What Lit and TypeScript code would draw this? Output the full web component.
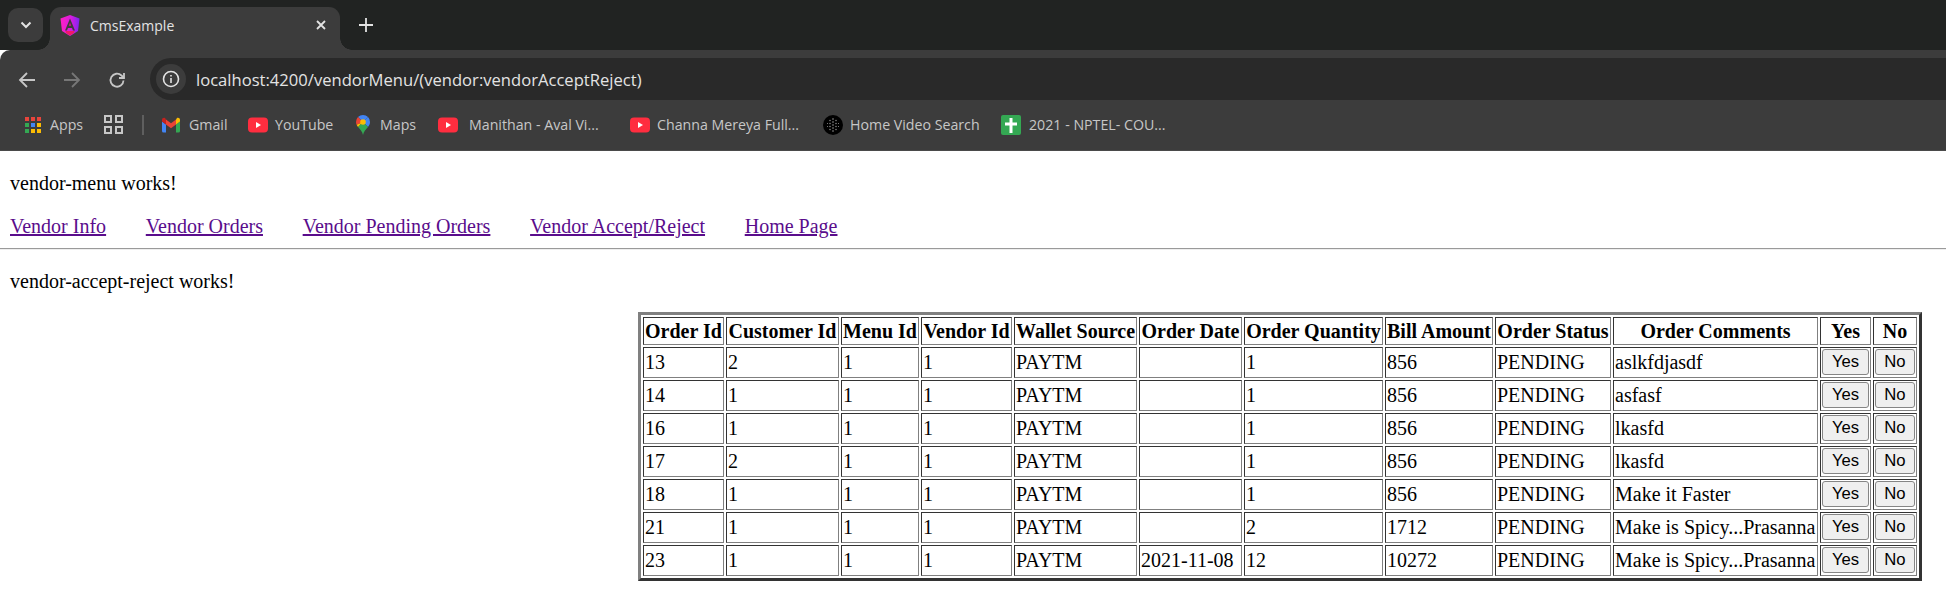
import { LitElement, html, css, svg } from 'lit';
import { customElement } from 'lit/decorators.js';

const ytIcon = svg`<rect x="0" y="2" width="20" height="15" rx="4" fill="#ff2d3f"/><path d="M8 6.500l5 3-5 3z" fill="#fff"/>`;

const icons: Record<string, unknown> = {
  apps: svg`
    <rect x="0" y="0" width="4" height="4" fill="#e8453c"/><rect x="6" y="0" width="4" height="4" fill="#e8453c"/><rect x="12" y="0" width="4" height="4" fill="#e8453c"/>
    <rect x="0" y="6" width="4" height="4" fill="#34a853"/><rect x="6" y="6" width="4" height="4" fill="#4285f4"/><rect x="12" y="6" width="4" height="4" fill="#fbbc04"/>
    <rect x="0" y="12" width="4" height="4" fill="#34a853"/><rect x="6" y="12" width="4" height="4" fill="#fbbc04"/><rect x="12" y="12" width="4" height="4" fill="#fbbc04"/>`,
  gmail: svg`
    <path d="M0 5v9.500A1.500 1.500 0 0 0 1.500 16H4V8z" fill="#4285f4"/>
    <path d="M14 16h2.500A1.500 1.500 0 0 0 18 14.500V5l-4 3z" fill="#34a853"/>
    <path d="M14 3v5l4-3V3.500C18 1.500 16 .8 14.800 1.800z" fill="#fbbc04"/>
    <path d="M4 8V3l5 3.800L14 3v5l-5 3.800z" fill="#ea4335"/>
    <path d="M0 3.500V5l4 3V3L3.200 1.800C2 .8 0 1.500 0 3.500z" fill="#c5221f"/>`,
  youtube: ytIcon,
  maps: svg`
    <path d="M7 0A7 7 0 0 0 2 2.100L7 7l5-4.900A7 7 0 0 0 7 0z" fill="#4285f4"/>
    <path d="M12 2.100A7 7 0 0 1 14 7c0 2-.8 3.500-2 5L7 7z" fill="#4285f4"/>
    <path d="M2 2.100A7 7 0 0 0 0 7c0 1 .2 1.800.6 2.700L7 7z" fill="#ea4335"/>
    <path d="M.6 9.700c.4.9.9 1.600 1.500 2.300L7 7z" fill="#fbbc04"/>
    <path d="M2.100 12C4 14.300 6.300 16.500 7 20c.7-3.500 3-5.700 5-8L7 7z" fill="#34a853"/>
    <circle cx="7" cy="7" r="2.800" fill="#fbbc04"/>`,
  home: svg`<circle cx="10" cy="10" r="10" fill="#000"/><g fill="#999"><circle cx="10" cy="4" r=".8"/><circle cx="10" cy="7" r=".8"/><circle cx="10" cy="10" r=".8"/><circle cx="10" cy="13" r=".8"/><circle cx="10" cy="16" r=".8"/><circle cx="7" cy="5.500" r=".7"/><circle cx="7" cy="8.500" r=".7"/><circle cx="7" cy="11.500" r=".7"/><circle cx="7" cy="14.500" r=".7"/><circle cx="13" cy="5.500" r=".7"/><circle cx="13" cy="8.500" r=".7"/><circle cx="13" cy="11.500" r=".7"/><circle cx="13" cy="14.500" r=".7"/><circle cx="4.500" cy="8.500" r=".5"/><circle cx="4.500" cy="11.500" r=".5"/><circle cx="15.500" cy="8.500" r=".5"/><circle cx="15.500" cy="11.500" r=".5"/></g>`,
  sheet: svg`<rect width="20" height="20" rx="2" fill="#34a853"/><path d="M8.500 3h3v4.500H16v3h-4.500V18h-3v-7.500H4v-3h4.500z" fill="#fff"/>`,
};

const bookmarks = [
  { label: 'Apps', icon: 'apps', box: '0 0 16 16', size: 16, width: 79, gap: 9 },
  { label: '', icon: 'grid', box: '', size: 0, width: 38, gap: 0 },
  { label: '', icon: 'sep', box: '', size: 0, width: 20, gap: 0 },
  { label: 'Gmail', icon: 'gmail', box: '0 0 18 17', size: 18, width: 86, gap: 9 },
  { label: 'YouTube', icon: 'youtube', box: '0 0 20 19', size: 20, width: 108, gap: 7 },
  { label: 'Maps', icon: 'maps', box: '0 0 14 20', size: 14, width: 82, gap: 10 },
  { label: 'Manithan - Aval Vi...', icon: 'youtube', box: '0 0 20 19', size: 20, width: 192, gap: 11 },
  { label: 'Channa Mereya Full...', icon: 'youtube', box: '0 0 20 19', size: 20, width: 193, gap: 7 },
  { label: 'Home Video Search', icon: 'home', box: '0 0 20 20', size: 20, width: 178, gap: 7 },
  { label: '2021 - NPTEL- COU...', icon: 'sheet', box: '0 0 20 20', size: 20, width: 170, gap: 8 },
];

const links = ['Vendor Info', 'Vendor Orders', 'Vendor Pending Orders', 'Vendor Accept/Reject', 'Home Page'];

const columns = [
  { title: 'Order Id', width: 81 },
  { title: 'Customer Id', width: 113 },
  { title: 'Menu Id', width: 78 },
  { title: 'Vendor Id', width: 91 },
  { title: 'Wallet Source', width: 123 },
  { title: 'Order Date', width: 103 },
  { title: 'Order Quantity', width: 139 },
  { title: 'Bill Amount', width: 108 },
  { title: 'Order Status', width: 116 },
  { title: 'Order Comments', width: 205 },
  { title: 'Yes', width: 51 },
  { title: 'No', width: 44 },
];

// order rows, same shape as the table columns minus the two buttons
const orders = [
  ['13', '2', '1', '1', 'PAYTM', '', '1', '856', 'PENDING', 'aslkfdjasdf'],
  ['14', '1', '1', '1', 'PAYTM', '', '1', '856', 'PENDING', 'asfasf'],
  ['16', '1', '1', '1', 'PAYTM', '', '1', '856', 'PENDING', 'lkasfd'],
  ['17', '2', '1', '1', 'PAYTM', '', '1', '856', 'PENDING', 'lkasfd'],
  ['18', '1', '1', '1', 'PAYTM', '', '1', '856', 'PENDING', 'Make it Faster'],
  ['21', '1', '1', '1', 'PAYTM', '', '2', '1712', 'PENDING', 'Make is Spicy...Prasanna'],
  ['23', '1', '1', '1', 'PAYTM', '2021-11-08', '12', '10272', 'PENDING', 'Make is Spicy...Prasanna'],
];

@customElement('app-root')
export class AppRoot extends LitElement {
  static styles = css`
    :host {
      display: block;
      background: #fff;
      color: #000;
      font-family: 'Liberation Serif', serif;
      font-size: 20px;
    }
    .strip {
      display: flex;
      height: 50px;
      background: #212322;
      box-sizing: border-box;
      padding: 7px 0 0 8px;
      font-family: 'Open Sans', sans-serif;
    }
    .tab-list {
      width: 35px;
      height: 34px;
      margin-top: 1px;
      background: #3c3c3c;
      border-radius: 10px;
      display: flex;
      align-items: center;
      justify-content: center;
    }
    .tab {
      position: relative;
      width: 290px;
      height: 43px;
      margin-left: 7px;
      background: #3c3c3c;
      border-radius: 11px 11px 0 0;
      display: flex;
      align-items: center;
      box-sizing: border-box;
      padding: 0 0 7px 10px;
      color: #e3e3e3;
      font-size: 14px;
    }
    .tab::before,
    .tab::after {
      content: '';
      position: absolute;
      bottom: 0;
      width: 12px;
      height: 12px;
    }
    .tab::before {
      left: -12px;
      background: radial-gradient(circle at 0 0, transparent 11.500px, #3c3c3c 12px);
    }
    .tab::after {
      right: -12px;
      background: radial-gradient(circle at 100% 0, transparent 11.500px, #3c3c3c 12px);
    }
    .tab-title {
      flex: 1;
      margin-left: 10px;
    }
    .tab-close {
      margin-right: 13px;
    }
    .new-tab {
      margin: 11px 0 0 19px;
    }
    .toolbar {
      display: flex;
      align-items: flex-start;
      height: 56px;
      background: #3c3c3c;
      border-radius: 10px 0 0 0;
      box-sizing: border-box;
      padding-top: 8px;
    }
    .nav {
      display: flex;
      width: 150px;
      box-sizing: border-box;
      padding-left: 18px;
      margin-top: 13px;
      gap: 27px;
    }
    .omnibox {
      flex: 1;
      height: 42px;
      background: #292929;
      border-radius: 21px 0 0 21px;
      display: flex;
      align-items: center;
      box-sizing: border-box;
      padding-left: 6px;
      color: #e3e3e3;
      font-family: 'Open Sans', sans-serif;
      font-size: 16.600px;
    }
    .omnibox span {
      padding-top: 1px;
    }
    .info {
      width: 30px;
      height: 30px;
      border-radius: 50%;
      background: #3c3c3c;
      display: flex;
      align-items: center;
      justify-content: center;
      margin-right: 10px;
    }
    .bookmarks {
      display: flex;
      align-items: center;
      height: 45px;
      background: #3c3c3c;
      box-sizing: border-box;
      padding: 0 0 7px 25px;
      border-bottom: 1px solid #4a4a4a;
      color: #c7c7c7;
      font-family: 'Open Sans', sans-serif;
      font-size: 14.200px;
    }
    .bookmark {
      display: flex;
      align-items: center;
      white-space: nowrap;
    }
    .sep {
      width: 2px;
      height: 20px;
      background: #5f5f5f;
    }
    .page {
      padding: 21px 0 0 0;
    }
    p {
      margin: 0;
      padding-left: 10px;
      line-height: 23px;
    }
    .links {
      display: flex;
      gap: 39.700px;
      padding: 20px 0 0 10px;
      line-height: 23px;
    }
    .links a {
      color: #5a0d8c;
      text-decoration: underline;
    }
    hr {
      margin: 10px 0 20px 0;
      border: none;
      border-top: 1px solid #9a9a9a;
      border-bottom: 1px solid #eee;
    }
    .table-wrap {
      display: flex;
      justify-content: flex-end;
      padding: 19px 24px 24px 0;
    }
    table {
      table-layout: fixed;
      border-collapse: separate;
      border-spacing: 2px;
      border-style: solid;
      border-width: 3px;
      border-color: #808080 #333 #333 #808080;
      width: 1284px;
    }
    th,
    td {
      box-sizing: border-box;
      padding: 0 1px;
      border: 1px solid;
      border-color: #333 #808080 #808080 #333;
      white-space: nowrap;
    }
    th {
      height: 28px;
      font-weight: bold;
      text-align: center;
    }
    td {
      height: 31px;
      text-align: left;
    }
    .btn-cell {
      padding: 1px;
      vertical-align: top;
    }
    button {
      display: block;
      width: 100%;
      height: 26px;
      margin: 0;
      padding: 0;
      background: #efefef;
      border: 1px solid #858585;
      border-radius: 3px;
      color: #000;
      font-family: 'Liberation Sans', sans-serif;
      font-size: 16.670px;
    }
  `;

  renderBookmark(b: (typeof bookmarks)[number]) {
    if (b.icon === 'grid') {
      return html`<div class="bookmark" style="width:${b.width}px">
        <svg width="19" height="19" viewBox="0 0 19 19" fill="none" stroke="#c7c7c7" stroke-width="2">
          <rect x="1" y="1" width="6" height="6"/><rect x="12" y="1" width="6" height="6"/>
          <rect x="1" y="12" width="6" height="6"/><rect x="12" y="12" width="6" height="6"/>
        </svg>
      </div>`;
    }
    if (b.icon === 'sep') {
      return html`<div class="bookmark" style="width:${b.width}px"><div class="sep"></div></div>`;
    }
    return html`<div class="bookmark" style="width:${b.width}px;gap:${b.gap}px">
      <svg width=${b.size} height="20" viewBox=${b.box}>${icons[b.icon]}</svg>
      <span>${b.label}</span>
    </div>`;
  }

  render() {
    return html`
      <div class="strip">
        <div class="tab-list">
          <svg width="12" height="8" viewBox="0 0 12 8" fill="none" stroke="#e3e3e3" stroke-width="2"><path d="M1.500 1.500L6 6l4.500-4.500"/></svg>
        </div>
        <div class="tab">
          <svg width="20" height="21" viewBox="0 0 20 21">
            <defs>
              <linearGradient id="ng" x1="0" y1="0" x2="1" y2="0">
                <stop offset="0" stop-color="#ff20c4"/>
                <stop offset=".55" stop-color="#d81ce0"/>
                <stop offset="1" stop-color="#7a26f0"/>
              </linearGradient>
            </defs>
            <path d="M10 0l9.500 3.400L18 16l-8 5-8-5L.5 3.400z" fill="url(#ng)"/>
            <path d="M10 3.500L15 15.500H13L12 13H8l-1 2.500H5z" fill="#3c3c3c"/>
            <path d="M8.800 10.800h2.400L10 7.800z" fill="#e0188a"/>
            <path d="M5.500 16h9l-.5 2-4 2.600L6 18z" fill="#ef1a68"/>
          </svg>
          <span class="tab-title">CmsExample</span>
          <svg class="tab-close" width="12" height="12" viewBox="0 0 12 12" stroke="#e3e3e3" stroke-width="1.800"><path d="M2 2l8 8M10 2l-8 8"/></svg>
        </div>
        <svg class="new-tab" width="14" height="14" viewBox="0 0 14 14" stroke="#e3e3e3" stroke-width="1.800"><path d="M7 0v14M0 7h14"/></svg>
      </div>
      <div class="toolbar">
        <div class="nav">
          <svg width="18" height="18" viewBox="0 0 18 18" fill="none" stroke="#c7c7c7" stroke-width="1.800"><path d="M17 9H2M9 2L2 9l7 7"/></svg>
          <svg width="18" height="18" viewBox="0 0 18 18" fill="none" stroke="#777" stroke-width="1.800"><path d="M1 9h15M9 2l7 7-7 7"/></svg>
          <svg width="18" height="18" viewBox="0 0 18 18" fill="none" stroke="#c7c7c7" stroke-width="1.800"><path d="M15.500 9.500A6.500 6.500 0 1 1 13.500 4.500L16 7"/><path d="M16 2v5h-5"/></svg>
        </div>
        <div class="omnibox">
          <div class="info">
            <svg width="18" height="18" viewBox="0 0 18 18" fill="none" stroke="#e3e3e3" stroke-width="1.600"><circle cx="9" cy="9" r="7.500"/><path d="M9 8v5M9 5v1.600"/></svg>
          </div>
          <span>localhost:4200/vendorMenu/(vendor:vendorAcceptReject)</span>
        </div>
      </div>
      <div class="bookmarks">${bookmarks.map((b) => this.renderBookmark(b))}</div>
      <div class="page">
        <p>vendor-menu works!</p>
        <nav class="links">${links.map((l) => html`<a href="#">${l}</a>`)}</nav>
        <hr />
        <p>vendor-accept-reject works!</p>
        <div class="table-wrap">
          <table>
            <colgroup>${columns.map((c) => html`<col style="width:${c.width}px" />`)}</colgroup>
            <thead>
              <tr>${columns.map((c) => html`<th>${c.title}</th>`)}</tr>
            </thead>
            <tbody>
              ${orders.map(
                (row) => html`<tr>
                  ${row.map((v) => html`<td>${v}</td>`)}
                  <td class="btn-cell"><button>Yes</button></td>
                  <td class="btn-cell"><button>No</button></td>
                </tr>`
              )}
            </tbody>
          </table>
        </div>
      </div>
    `;
  }
}
